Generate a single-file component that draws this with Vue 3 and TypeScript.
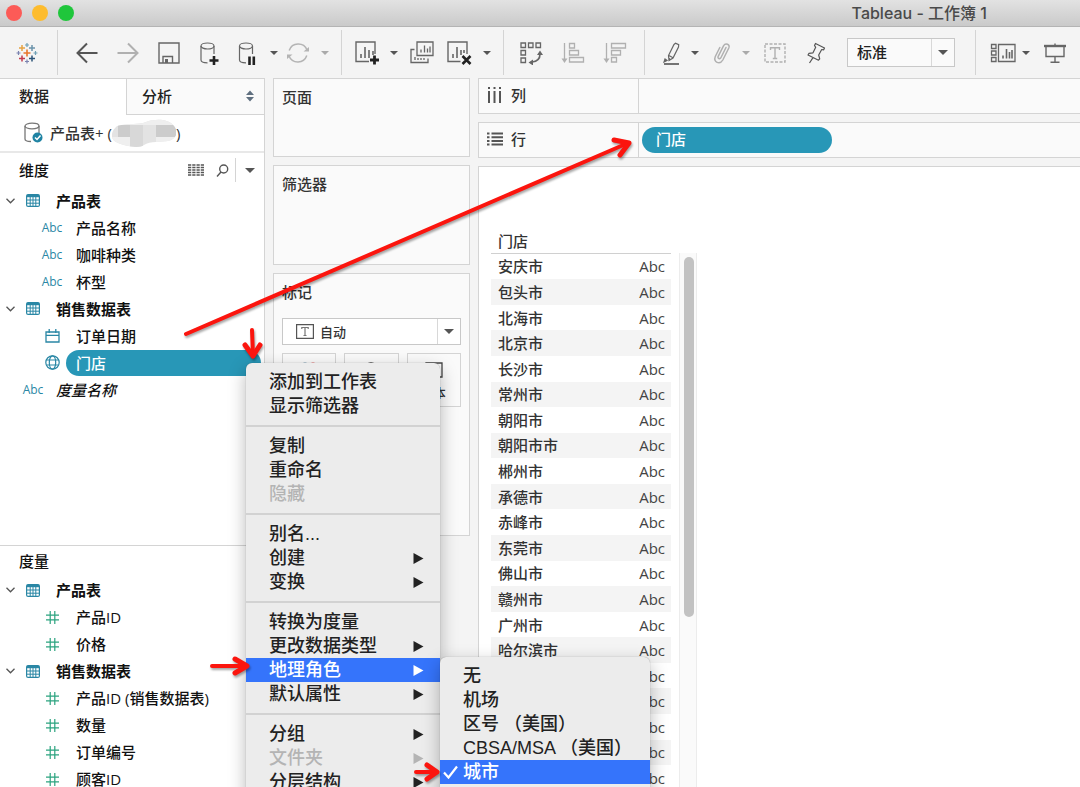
<script setup lang="ts">
import { ref } from 'vue'

type FieldIcon = 'abc' | 'table' | 'calendar' | 'globe' | 'number'

interface Field {
  label: string
  icon: FieldIcon
  level: 'group' | 'child' | 'root'
  selected?: boolean
}

interface MenuItem {
  label: string
  arrow?: boolean
  disabled?: boolean
  active?: boolean
}

const dimensions: Field[] = [
  { label: '产品表', icon: 'table', level: 'group' },
  { label: '产品名称', icon: 'abc', level: 'child' },
  { label: '咖啡种类', icon: 'abc', level: 'child' },
  { label: '杯型', icon: 'abc', level: 'child' },
  { label: '销售数据表', icon: 'table', level: 'group' },
  { label: '订单日期', icon: 'calendar', level: 'child' },
  { label: '门店', icon: 'globe', level: 'child', selected: true },
  { label: '度量名称', icon: 'abc', level: 'root' },
]

const measures: Field[] = [
  { label: '产品表', icon: 'table', level: 'group' },
  { label: '产品ID', icon: 'number', level: 'child' },
  { label: '价格', icon: 'number', level: 'child' },
  { label: '销售数据表', icon: 'table', level: 'group' },
  { label: '产品ID (销售数据表)', icon: 'number', level: 'child' },
  { label: '数量', icon: 'number', level: 'child' },
  { label: '订单编号', icon: 'number', level: 'child' },
  { label: '顾客ID', icon: 'number', level: 'child' },
]

const panes = [
  { id: 'dimensions', title: '维度', fields: dimensions, tools: true },
  { id: 'measures', title: '度量', fields: measures, tools: false },
]

const cities: string[] = [
  '安庆市', '包头市', '北海市', '北京市', '长沙市', '常州市', '朝阳市',
  '朝阳市市', '郴州市', '承德市', '赤峰市', '东莞市', '佛山市', '赣州市',
  '广州市', '哈尔滨市', '', '', '', '', '',
]

const menuGroups: MenuItem[][] = [
  [{ label: '添加到工作表' }, { label: '显示筛选器' }],
  [{ label: '复制' }, { label: '重命名' }, { label: '隐藏', disabled: true }],
  [{ label: '别名...' }, { label: '创建', arrow: true }, { label: '变换', arrow: true }],
  [
    { label: '转换为度量' },
    { label: '更改数据类型', arrow: true },
    { label: '地理角色', arrow: true, active: true },
    { label: '默认属性', arrow: true },
  ],
  [
    { label: '分组', arrow: true },
    { label: '文件夹', arrow: true, disabled: true },
    { label: '分层结构', arrow: true },
  ],
]

const geoRoles = ['无', '机场', '区号 （美国）', 'CBSA/MSA （美国）', '城市']
const geoRole = ref('城市')
const fit = ref('标准')
const mark = ref('自动')
</script>

<template>
  <div class="window">
    <header class="titlebar">
      <div class="lights">
        <button class="light red" aria-label="关闭"></button>
        <button class="light yellow" aria-label="最小化"></button>
        <button class="light green" aria-label="缩放"></button>
      </div>
      <h1 class="title">Tableau - 工作簿 1</h1>
    </header>

    <div class="toolbar" role="toolbar">
      <div class="tools tools-home">
        <button class="tool" aria-label="Tableau">
          <svg width="24" height="24" viewBox="0 0 24 24" fill="none">
            <path d="M12 8.500v7M8.500 12h7" stroke="#e8762c" stroke-width="1.600" />
            <path d="M7 4v6M4 7h6" stroke="#e5a343" stroke-width="1.500" />
            <path d="M17 4v6M14 7h6" stroke="#6b93ab" stroke-width="1.500" />
            <path d="M7 14.500v6M4 17.500h6" stroke="#c13a4e" stroke-width="1.500" />
            <path d="M17 14.500v6M14 17.500h6" stroke="#2b5377" stroke-width="1.500" />
            <path d="M12 2v4M10 4h4M20.500 10v4M18.500 12h4" stroke="#6fa0b5" stroke-width="1.200" />
            <path d="M3.500 10v4M1.500 12h4M12 18.500v4M10 20.500h4" stroke="#7b83b0" stroke-width="1.200" />
          </svg>
        </button>
      </div>

      <div class="tools tools-data">
        <button class="tool" aria-label="撤消">
          <svg width="24" height="24" viewBox="0 0 24 24" fill="none" stroke="#555" stroke-width="2">
            <path d="M22.500 12H2M12 2.500 2.500 12l9.500 9.500" />
          </svg>
        </button>
        <button class="tool" aria-label="重做">
          <svg width="24" height="24" viewBox="0 0 24 24" fill="none" stroke="#b0b0b0" stroke-width="2">
            <path d="M1.500 12H22M12 2.500l9.500 9.500-9.500 9.500" />
          </svg>
        </button>
        <button class="tool" aria-label="保存">
          <svg width="24" height="24" viewBox="0 0 24 24" fill="none" stroke="#666" stroke-width="1.400">
            <path d="M2 2h20v20H2zM6 22v-6.500h9.500V22" />
            <path d="M8 18h3v4H8z" fill="#666" stroke="none" />
          </svg>
        </button>
        <button class="tool" aria-label="新建数据源">
          <svg width="24" height="24" viewBox="0 0 24 24" fill="none" stroke="#666" stroke-width="1.200">
            <ellipse cx="9.500" cy="5" rx="6.500" ry="3" />
            <path d="M3 5v14c0 1.800 2.800 2.800 6.500 2.800M16 5v8" />
            <path d="M16 15v9M11.500 19.500h9" stroke="#222" stroke-width="2.600" />
          </svg>
        </button>
        <button class="tool" aria-label="暂停自动更新">
          <svg width="24" height="24" viewBox="0 0 24 24" fill="none" stroke="#666" stroke-width="1.200">
            <ellipse cx="11" cy="5" rx="6.500" ry="3" />
            <path d="M4.500 5v14c0 1.800 2.800 2.800 6.500 2.800M17.500 5v8" />
            <path d="M14.500 15.500v8.500M18.800 15.500v8.500" stroke="#222" stroke-width="2.600" />
          </svg>
        </button>
        <button class="tool caret" aria-label="更新选项"></button>
        <button class="tool" aria-label="刷新">
          <svg width="24" height="24" viewBox="0 0 24 24" fill="none" stroke="#b4b4b4" stroke-width="1.500">
            <path d="M3.200 9.500A9.500 9.500 0 0 1 21 9M20.800 14.500A9.500 9.500 0 0 1 3 15" />
            <path d="M17.500 10.500h5.500v-4.500zM1 13.500h5.500L1 18z" fill="#b4b4b4" stroke="none" />
          </svg>
        </button>
        <button class="tool caret pale" aria-label="刷新选项"></button>
      </div>

      <div class="tools tools-sheet">
        <button class="tool" aria-label="新建工作表">
          <svg width="26" height="26" viewBox="0 0 26 26" fill="none" stroke="#666" stroke-width="1.400">
            <path d="M15 21.500H2V2h19v12" />
            <path d="M7 18v-4M11 18V7M15 18v-8M19 15v-4" stroke-width="1.600" />
            <path d="M20.500 15.500v9M16 20h9" stroke="#222" stroke-width="2.800" />
          </svg>
        </button>
        <button class="tool caret" aria-label="新建选项"></button>
        <button class="tool" aria-label="复制工作表">
          <svg width="26" height="26" viewBox="0 0 26 26" fill="none" stroke="#666" stroke-width="1.300">
            <path d="M8 2h16v13.500H8z" />
            <path d="M5.500 9.500H2v13h17V18.500" />
            <path d="M12 12.500v-3M15.500 12.500v-7M18.500 12.500v-4M21 12.500v-6M6 20v-3M9 20v-2M12 20v-2M15 20v-2" />
          </svg>
        </button>
        <button class="tool" aria-label="清除工作表">
          <svg width="26" height="26" viewBox="0 0 26 26" fill="none" stroke="#666" stroke-width="1.400">
            <path d="M14.500 21.500H2V2h19v12" />
            <path d="M7 18v-4M11 18V7M15 15v-5M18 13v-3" stroke-width="1.600" />
            <path d="M16.500 16l8 8M24.500 16l-8 8" stroke="#222" stroke-width="2.600" />
          </svg>
        </button>
        <button class="tool caret" aria-label="清除选项"></button>
      </div>

      <div class="tools tools-sort">
        <button class="tool" aria-label="交换行和列">
          <svg width="24" height="24" viewBox="0 0 24 24" fill="none" stroke="#666" stroke-width="1.300">
            <path d="M2 2h4.500v4.500H2zM9.500 2H14v4.500H9.500zM17 2h4.500v4.500H17zM2 9.500h4.500V14H2zM2 17h4.500v4.500H2z" />
            <path d="M21 13c0 5-3 7.500-8 8" stroke-width="1.700" />
            <path d="M21 9.500l3 4.500h-6zM9.500 21.500l4.500-3v6z" fill="#666" stroke="none" />
          </svg>
        </button>
        <button class="tool" aria-label="升序排序">
          <svg width="24" height="24" viewBox="0 0 24 24" fill="none" stroke="#b0b0b0" stroke-width="1.300">
            <path d="M3.500 2v17M8.500 2.500h5V7h-5zM8.500 9.500h9V14h-9zM8.500 16.500h14V21h-14z" />
            <path d="M.500 17.500h6l-3 4.500z" fill="#b0b0b0" stroke="none" />
          </svg>
        </button>
        <button class="tool" aria-label="降序排序">
          <svg width="24" height="24" viewBox="0 0 24 24" fill="none" stroke="#b0b0b0" stroke-width="1.300">
            <path d="M3.500 2v17M8.500 2.500h14V7h-14zM8.500 9.500h9V14h-9zM8.500 16.500h5V21h-5z" />
            <path d="M.500 17.500h6l-3 4.500z" fill="#b0b0b0" stroke="none" />
          </svg>
        </button>
      </div>

      <div class="tools tools-format">
        <button class="tool" aria-label="突出显示">
          <svg width="24" height="24" viewBox="0 0 24 24" fill="none" stroke="#666" stroke-width="1.200">
            <path d="M13 3.500l1.500-1.300 3.200 1.500-.2 2.300-5.500 11-4 2.500-.5-5zM8 14.500l4 2.200M7.500 17l1.500 1" />
            <path d="M4 18l2 1.500-3 1.500z" fill="#666" />
            <path d="M3 23h15" stroke-width="1.800" />
          </svg>
        </button>
        <button class="tool caret" aria-label="突出显示选项"></button>
        <button class="tool" aria-label="组成员">
          <svg width="24" height="24" viewBox="0 0 24 24" fill="none" stroke="#b0b0b0" stroke-width="1.500" stroke-linecap="round">
            <path d="M16 6.500l-5 10c-1 2-3.800 1-2.800-1.200l5.300-10.500c2-3.500 7-1.500 5.300 2.200l-6 12c-2.800 5-10 2.500-7.500-3.500l4.500-9" />
          </svg>
        </button>
        <button class="tool caret pale" aria-label="组选项"></button>
        <button class="tool" aria-label="显示标记标签">
          <svg width="24" height="24" viewBox="0 0 24 24" fill="none" stroke="#b0b0b0" stroke-width="1.400">
            <path d="M2 3h20v18H2z" stroke-dasharray="3 1.500" />
            <path d="M7.500 9V6.700h9V9M12 6.700v10.800M9.800 17.500h4.400" />
          </svg>
        </button>
        <button class="tool" aria-label="固定轴">
          <svg width="24" height="24" viewBox="0 0 24 24" fill="none" stroke="#555" stroke-width="1.200" stroke-linejoin="round">
            <path d="M11.500 2.500l9 4.500-.8 1.800-2-.3-3 5.500 1 3.800-1.200 1.400L4 14l1-1.600 4-.6 2.700-5.500-1.200-1.800zM9 16.700L5.500 22" />
          </svg>
        </button>
        <div class="combo combo-fit">
          <select v-model="fit" aria-label="适合">
            <option>标准</option>
          </select>
          <span class="combo-caret"></span>
        </div>
      </div>

      <div class="tools tools-show">
        <button class="tool" aria-label="智能推荐">
          <svg width="28" height="24" viewBox="0 0 28 24" fill="none" stroke="#666" stroke-width="1.300">
            <path d="M2.500 3.500h4.500v4H2.500zM2.500 10h4.500v4H2.500zM2.500 16.500h4.500v4H2.500zM9.500 3.500H26v17H9.500z" />
            <path d="M14 17.500v-3M17.500 17.500V8M20.500 17.500V11M23 17.500V9" stroke-width="1.600" />
          </svg>
        </button>
        <button class="tool caret" aria-label="智能推荐选项"></button>
        <button class="tool" aria-label="演示模式">
          <svg width="24" height="24" viewBox="0 0 24 24" fill="none" stroke="#666" stroke-width="1.400">
            <path d="M1 5h22" stroke-width="2.400" />
            <path d="M3 5v10.500h18V5M12 2.500V5M12 15.500v5.500M7.500 21.300h9" />
          </svg>
        </button>
      </div>
    </div>

    <div class="workspace">
      <aside class="sidebar">
        <div class="tabs" role="tablist">
          <button class="tab current" role="tab" aria-selected="true">数据</button>
          <button class="tab" role="tab" aria-selected="false">
            分析
            <svg width="8" height="12" viewBox="0 0 8 12" fill="#607080">
              <path d="M0 5l4-4.500L8 5zM0 7l4 4.500L8 7z" />
            </svg>
          </button>
        </div>

        <button class="source">
          <svg class="source-icon" width="20" height="22" viewBox="0 0 20 22" fill="none" stroke="#777" stroke-width="1.300">
            <ellipse cx="8" cy="4" rx="7" ry="2.800" />
            <path d="M1 4v13c0 1.500 2.500 2.500 6 2.500M15 4v7" />
            <circle cx="13.500" cy="15.500" r="5" fill="#1f83a3" stroke="none" />
            <path d="M11 15.500l2 2 3.500-4" stroke="#fff" stroke-width="1.500" />
          </svg>
          <span>产品表+ (</span>
          <svg class="mosaic" width="64" height="28" viewBox="0 0 64 28" aria-hidden="true">
            <clipPath id="mosaic-shape">
              <path d="M5 7C18 4 26 6 34 3S56-1 62 7s0 14-6 15-18 0-24 4-18 1-26-2S-2 13 5 7z" />
            </clipPath>
            <g clip-path="url(#mosaic-shape)">
              <path fill="#e3e3e3" d="M0 0h64v28H0z" />
              <path fill="#efefef" d="M0 0h64v6H0zM0 18h18v10H0zM44 18h20v10H44z" />
              <path fill="#cccccc" d="M6 6h12v12H6zM44 6h20v12H44z" />
              <path fill="#d8d8d8" d="M18 6h13v12H18zM18 18h13v10H18z" />
            </g>
          </svg>
          <span>)</span>
        </button>

        <section v-for="pane in panes" :key="pane.id" class="pane" :class="pane.id">
          <div class="pane-head">
            <h2>{{ pane.title }}</h2>
            <div v-if="pane.tools" class="pane-tools">
              <button class="tool" aria-label="查看数据">
                <svg width="16" height="12" viewBox="0 0 16 12" stroke="#555" stroke-width="1.300">
                  <path d="M0 1h16M0 3.500h16M0 6h16M0 8.500h16M0 11h16" stroke-dasharray="3.250 1" />
                </svg>
              </button>
              <button class="tool" aria-label="查找字段">
                <svg width="13" height="13" viewBox="0 0 13 13" fill="none" stroke="#555" stroke-width="1.400">
                  <circle cx="7.700" cy="5" r="4" />
                  <path d="M5 8L1 12.500" />
                </svg>
              </button>
              <button class="tool caret wide" aria-label="窗格菜单"></button>
            </div>
          </div>
          <ul class="fields">
            <li v-for="(field, i) in pane.fields" :key="i" class="field" :class="[field.level, { selected: field.selected }]">
              <svg v-if="field.level === 'group'" class="chevron" width="9" height="6" viewBox="0 0 9 6" fill="none" stroke="#555" stroke-width="1.300">
                <path d="M.500 .800l4 4 4-4" />
              </svg>
              <span class="field-icon">
                <span v-if="field.icon === 'abc'" class="abc">Abc</span>
                <svg v-else-if="field.icon === 'table'" width="14" height="13" viewBox="0 0 14 13" fill="none" stroke="#2a87a5">
                  <rect x=".600" y=".600" width="12.800" height="11.800" rx="1.500" stroke-width="1.200" />
                  <path d="M1 2h12" stroke-width="2.400" />
                  <path d="M1 6h12M1 9.200h12M4.200 3v9M7 3v9M9.800 3v9" />
                </svg>
                <svg v-else-if="field.icon === 'calendar'" width="15" height="14" viewBox="0 0 15 14" fill="none" stroke="#2a87a5" stroke-width="1.300">
                  <path d="M1 3h13v10H1zM1 6.300h13M4.200 0v4M10.800 0v4" />
                </svg>
                <svg v-else-if="field.icon === 'globe'" width="15" height="15" viewBox="0 0 15 15" fill="none" stroke="#2a87a5" stroke-width="1.200">
                  <circle cx="7.500" cy="7.500" r="6.700" />
                  <ellipse cx="7.500" cy="7.500" rx="3.200" ry="6.700" />
                  <path d="M1.500 5h12M1.500 10h12" />
                </svg>
                <svg v-else width="13" height="13" viewBox="0 0 13 13" fill="none" stroke="#2ba37f" stroke-width="1.200">
                  <path d="M4.200 0v13M8.800 0v13M0 4.200h13M0 8.800h13" />
                </svg>
              </span>
              <button class="field-name">{{ field.label }}</button>
            </li>
          </ul>
        </section>
      </aside>

      <div class="cards">
        <section class="card card-pages"><h2>页面</h2></section>
        <section class="card card-filters"><h2>筛选器</h2></section>
        <section class="card card-marks">
          <h2>标记</h2>
          <div class="combo combo-mark">
            <svg class="mark-icon" width="18" height="15" viewBox="0 0 18 15" fill="none" stroke="#555" stroke-width="1.200">
              <path d="M.600 .600h16.800v13.800H.600z" />
              <path d="M5.800 5V3.500h6.400V5M9 3.500v8M7.500 11.500h3" stroke="#777" />
            </svg>
            <select v-model="mark" aria-label="标记类型">
              <option>自动</option>
            </select>
            <span class="combo-caret"></span>
          </div>
          <div class="mark-buttons">
            <button>
              <svg width="18" height="16" viewBox="0 0 18 16">
                <circle cx="5" cy="4" r="3.500" fill="#6b93ab" />
                <circle cx="13" cy="4" r="3.500" fill="#e15759" />
                <circle cx="5" cy="12" r="3.500" fill="#f0a14a" />
                <circle cx="13" cy="12" r="3.500" fill="#76b7b2" />
              </svg>
              颜色
            </button>
            <button>
              <svg width="18" height="16" viewBox="0 0 18 16" fill="none" stroke="#444" stroke-width="1.500">
                <circle cx="9" cy="7" r="6" />
              </svg>
              大小
            </button>
            <button>
              <svg width="18" height="16" viewBox="0 0 18 16" fill="none" stroke="#444" stroke-width="1.300">
                <path d="M1 1h16v14H1zM6 5.500V4h6v1.500M9 4v8" />
              </svg>
              文本
            </button>
          </div>
        </section>
      </div>

      <main class="canvas">
        <div class="shelf">
          <div class="shelf-name">
            <svg width="16" height="16" viewBox="0 0 16 16" stroke="#555" stroke-width="2">
              <path d="M2 0v2M2 4v12M7.500 0v2M7.500 4v12M13 0v2M13 4v12" />
            </svg>
            列
          </div>
        </div>
        <div class="shelf">
          <div class="shelf-name">
            <svg width="16" height="14" viewBox="0 0 16 14" stroke="#555" stroke-width="2">
              <path d="M0 1.500h2.500M4.500 1.500H16M0 5.200h2.500M4.500 5.200H16M0 8.900h2.500M4.500 8.900H16M0 12.600h2.500M4.500 12.600H16" />
            </svg>
            行
          </div>
          <button class="pill">门店</button>
        </div>
        <div class="view">
          <table class="crosstab">
            <thead>
              <tr><th scope="col" colspan="2">门店</th></tr>
            </thead>
            <tbody>
              <tr v-for="(city, i) in cities" :key="i">
                <td>{{ city }}</td>
                <td class="value">Abc</td>
              </tr>
            </tbody>
          </table>
          <div class="scroll"><div class="thumb"></div></div>
        </div>
      </main>
    </div>

    <div class="menu" role="menu">
      <ul v-for="(group, g) in menuGroups" :key="g" class="menu-group">
        <li v-for="item in group" :key="item.label">
          <button class="menu-item" :class="{ active: item.active }" :disabled="item.disabled" role="menuitem">
            {{ item.label }}
            <svg v-if="item.arrow" width="11" height="11" viewBox="0 0 11 11" fill="currentColor">
              <path d="M.500 0l10 5.500-10 5.500z" />
            </svg>
          </button>
        </li>
      </ul>
    </div>

    <div class="menu submenu" role="menu">
      <ul class="menu-group">
        <li v-for="role in geoRoles" :key="role">
          <button
            class="menu-item"
            :class="{ active: role === geoRole }"
            role="menuitemradio"
            :aria-checked="role === geoRole"
            @click="geoRole = role"
          >
            <svg v-if="role === geoRole" class="check" width="15" height="14" viewBox="0 0 15 14" fill="none" stroke="currentColor" stroke-width="2.200">
              <path d="M1 7.500l4.500 5L14 1.500" />
            </svg>
            {{ role }}
          </button>
        </li>
      </ul>
    </div>

    <svg class="pointers" width="1080" height="787" viewBox="0 0 1080 787" fill="none" stroke="#fb150e" stroke-width="4" stroke-linecap="round" stroke-linejoin="round" aria-hidden="true">
      <path d="M186 334L628 143" />
      <path d="M252 330l1 26M212 666h34M416 772h21" />
      <path d="M614 140l15 3-9 12M245 345l8 11 7-11M235 659l12 7-12 7M427 765l10 7-10 7" stroke-width="5" />
    </svg>
  </div>
</template>

<style>
html,
body {
  margin: 0;
  height: 100%;
}
</style>

<style scoped>
* {
  box-sizing: border-box;
}

.window {
  position: relative;
  display: flex;
  flex-direction: column;
  height: 100vh;
  overflow: hidden;
  background: #f4f4f4;
  color: #333;
  font-family: "Open Sans", "Noto Sans CJK SC", sans-serif;
  font-size: 15px;
  font-weight: 500;
  line-height: 20px;
}

button,
select {
  margin: 0;
  padding: 0;
  border: 0;
  background: none;
  color: inherit;
  font: inherit;
}

h1,
h2 {
  margin: 0;
  font: inherit;
}

ul {
  margin: 0;
  padding: 0;
  list-style: none;
}

svg {
  display: block;
  flex: none;
}

/* Title bar */
.titlebar {
  flex: none;
  display: flex;
  align-items: center;
  justify-content: space-between;
  height: 27px;
  padding: 0 93px 0 6px;
  border-bottom: 1px solid #b4b4b4;
  background: linear-gradient(#e2e2e2, #cacaca);
}

.lights {
  display: flex;
  gap: 10px;
}

.light {
  width: 16px;
  height: 16px;
  border-radius: 50%;
}

.red { background: #fc5b57; }
.yellow { background: #fdbc2e; }
.green { background: #1fc63b; }

.title {
  color: #4a4a4a;
  font-family: Inter, "Noto Sans CJK SC", sans-serif;
  font-size: 16px;
}

/* Toolbar */
.toolbar {
  flex: none;
  display: flex;
  height: 51px;
  padding: 3px 0;
}

.tools {
  display: grid;
  align-items: center;
  border-right: 1px solid #d4d4d4;
}

.tools-home { grid-template-columns: 54px; padding-right: 3px; }
.tools-data { grid-template-columns: repeat(4, 41px) 34px 20px 28px 26px; padding: 0 3px 0 8px; }
.tools-sheet { grid-template-columns: 34px 20px 36px 38px 18px; padding: 0 7px 0 8px; }
.tools-sort { grid-template-columns: repeat(3, 42px); padding: 0 8px 0 6px; }
.tools-format { grid-template-columns: 24px 20px 34px 14px 44px 38px 120px; padding: 0 20px 0 16px; }
.tools-show { grid-template-columns: 34px 12px 46px; padding-left: 10px; border-right: 0; }

.tool {
  display: flex;
  align-items: center;
  justify-content: center;
}

.caret::before,
.combo-caret::before {
  content: "";
  border: 4px solid transparent;
  border-top-color: #555;
  border-bottom: 0;
}

.caret.pale::before {
  border-top-color: #aaa;
}

.caret.wide::before {
  border-width: 5px 5px 0;
}

.combo {
  display: flex;
  border: 1px solid #c8c8c8;
  background: #fafafa;
}

.combo select {
  flex: 1;
  min-width: 0;
  appearance: none;
  outline: 0;
}

.combo-caret {
  display: flex;
  align-items: center;
  justify-content: center;
  width: 23px;
  border-left: 1px solid #d8d8d8;
}

.combo-caret::before {
  border-width: 5px 5px 0;
}

.combo-fit {
  height: 29px;
  margin-left: 12px;
  color: #222;
}

.combo-fit select {
  padding: 0 0 2px 9px;
}

/* Workspace */
.workspace {
  flex: 1;
  display: flex;
  gap: 8px;
  min-height: 0;
}

.sidebar {
  flex: none;
  display: flex;
  flex-direction: column;
  width: 265px;
  border: solid #d4d4d4;
  border-width: 1px 1px 0 0;
  background: #fff;
  color: #111;
}

.tabs {
  flex: none;
  display: grid;
  grid-template-columns: 126px 1fr;
  height: 36px;
}

.tab {
  display: flex;
  align-items: center;
  justify-content: space-between;
  padding: 0 10px 2px 15px;
  border: solid #d4d4d4;
  border-width: 0 0 1px 1px;
  background: #fafafa;
  color: #222;
}

.tab.current {
  padding: 0 0 3px 19px;
  border: 0;
  background: #fff;
}

.source {
  flex: none;
  display: flex;
  align-items: center;
  height: 38px;
  padding: 0 0 1px 24px;
  border-bottom: 2px solid #e8e8e8;
  color: #333;
}

.source-icon {
  margin-right: 6px;
}

.pane {
  min-height: 0;
  overflow: hidden;
}

.dimensions {
  flex: 393 1 0;
  border-bottom: 1px solid #d4d4d4;
}

.measures {
  flex: 242 1 0;
}

.pane-head {
  display: flex;
  align-items: center;
  justify-content: space-between;
  height: 34px;
  padding-left: 19px;
}

.measures .pane-head {
  height: 31px;
}

.pane-tools {
  display: grid;
  grid-template-columns: 26px 26px 29px;
  height: 24px;
}

.pane-tools .wide {
  border-left: 1px solid #d4d4d4;
}

.field {
  display: flex;
  align-items: center;
  height: 27px;
  padding-left: 40px;
}

.field.group {
  padding-left: 6px;
  font-weight: 700;
}

.field.root {
  padding-left: 21px;
  font-style: italic;
}

.chevron {
  margin-right: 6px;
}

.field-icon {
  display: flex;
  justify-content: center;
  width: 24px;
  margin-right: 12px;
}

.group .field-icon,
.root .field-icon {
  margin-right: 11px;
}

.abc {
  color: #2a87a5;
  font-size: 12px;
  font-style: normal;
  font-weight: 400;
}

.field-name {
  text-align: left;
}

.selected .field-icon {
  margin-right: 2px;
}

.selected .field-name {
  flex: 1;
  height: 26px;
  margin-right: 3px;
  padding-left: 10px;
  border-radius: 13px;
  background: #2897b7;
  color: #fff;
}

/* Cards */
.cards {
  flex: none;
  display: flex;
  flex-direction: column;
  gap: 8px;
  width: 197px;
}

.card {
  padding: 8px;
  border: 1px solid #d4d4d4;
  background: #fafafa;
}

.card-pages { height: 79px; }
.card-filters { height: 100px; }
.card-marks { height: 263px; }

.combo-mark {
  align-items: stretch;
  height: 27px;
  margin-top: 16px;
  background: #fff;
  font-size: 13px;
}

.mark-icon {
  align-self: center;
  margin: 0 6px 0 13px;
}

.mark-buttons {
  display: grid;
  grid-template-columns: repeat(3, 1fr);
  gap: 8px;
  margin-top: 8px;
}

.mark-buttons button {
  display: flex;
  flex-direction: column;
  align-items: center;
  gap: 6px;
  height: 54px;
  padding-top: 8px;
  border: 1px solid #d4d4d4;
  font-size: 12px;
}

/* Shelves and view */
.canvas {
  flex: 1;
  display: flex;
  flex-direction: column;
  gap: 8px;
  min-width: 0;
}

.shelf {
  flex: none;
  display: flex;
  align-items: center;
  height: 36px;
  border: solid #d4d4d4;
  border-width: 1px 0 1px 1px;
  background: #fafafa;
}

.shelf-name {
  display: flex;
  align-items: center;
  align-self: stretch;
  gap: 8px;
  width: 160px;
  padding: 0 0 2px 8px;
  border-right: 1px solid #d4d4d4;
}

.pill {
  width: 190px;
  height: 26px;
  margin-left: 3px;
  padding: 0 0 2px 14px;
  border-radius: 13px;
  background: #2897b7;
  color: #fff;
  text-align: left;
}

.view {
  flex: 1;
  display: flex;
  align-items: flex-start;
  gap: 8px;
  min-height: 0;
  padding: 62px 0 0 12px;
  overflow: hidden;
  border: solid #d4d4d4;
  border-width: 1px 0 0 1px;
  background: #fff;
}

.crosstab {
  width: 180px;
  height: 562px;
  border-collapse: collapse;
}

.crosstab th {
  height: 24px;
  padding: 0 7px;
  border-bottom: 1px solid #d0d0d0;
  font-weight: 500;
  text-align: left;
}

.crosstab td {
  padding: 0 0 0 7px;
}

.crosstab tbody tr:nth-child(even) {
  background: #f4f4f4;
}

.crosstab .value {
  padding: 0 6px 0 0;
  color: #444;
  font-weight: 400;
  text-align: right;
}

.scroll {
  width: 18px;
  height: 560px;
  margin-top: 24px;
  padding: 4px;
  border: solid #ececec;
  border-width: 0 1px;
  background: #fafafa;
}

.thumb {
  width: 10px;
  height: 360px;
  margin: 0 auto;
  border-radius: 5px;
  background: #c2c2c2;
}

/* Context menus */
.menu {
  position: absolute;
  top: 363px;
  left: 246px;
  width: 194px;
  height: 460px;
  padding-top: 7px;
  border-radius: 6px;
  background: #ececec;
  box-shadow: 0 0 1px rgba(0, 0, 0, 0.4), 0 6px 18px rgba(0, 0, 0, 0.28);
  color: #222;
  font-family: "Liberation Sans", "Noto Sans CJK SC", sans-serif;
  font-size: 18px;
  line-height: 24px;
}

.menu-group + .menu-group {
  margin-top: 7px;
  padding-top: 7px;
  border-top: 2px solid #d2d2d2;
}

.menu-item {
  display: flex;
  align-items: center;
  justify-content: space-between;
  width: 100%;
  height: 24px;
  padding: 0 16px 0 23px;
  white-space: nowrap;
}

.menu-item:disabled {
  color: #b4b4b4;
}

.menu-item.active {
  background: #3574fb;
  color: #fff;
}

.submenu {
  top: 657px;
  left: 440px;
  width: 210px;
  height: 300px;
}

.submenu .menu-item {
  justify-content: flex-start;
}

.submenu .menu-item.active {
  gap: 5px;
  padding-left: 3px;
}

.pointers {
  position: absolute;
  top: 0;
  left: 0;
  pointer-events: none;
  filter: drop-shadow(1px 2px 1px rgba(0, 0, 0, 0.35));
}
</style>
